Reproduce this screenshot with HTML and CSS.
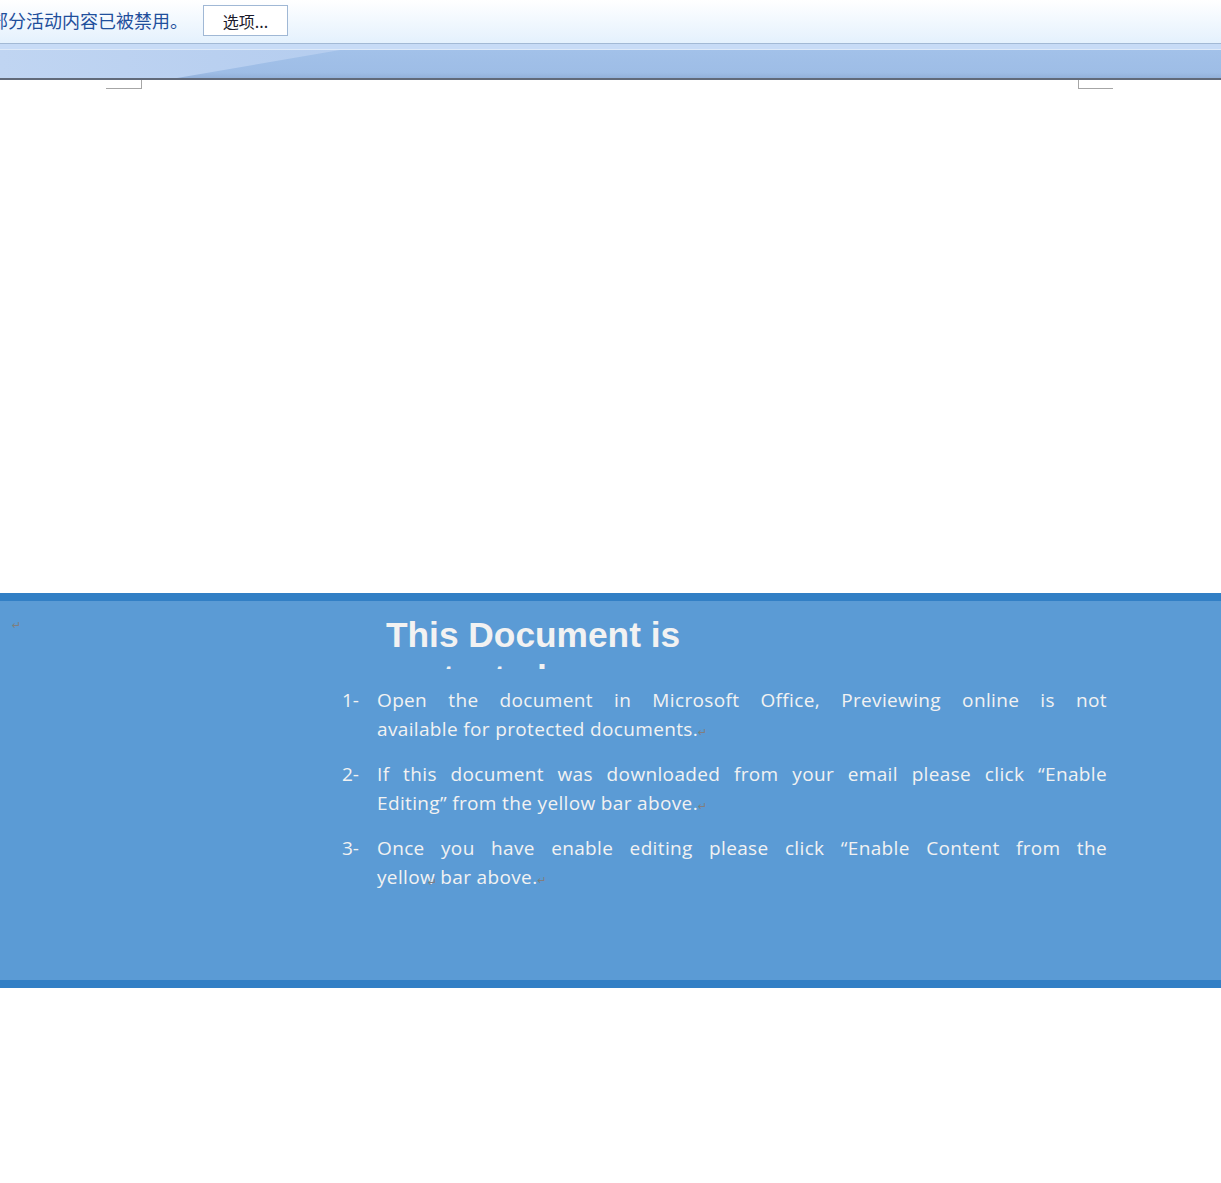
FILE: index.html
```html
<!DOCTYPE html>
<html lang="zh-CN">
<head>
    <meta charset="UTF-8">
    <meta name="viewport" content="width=device-width, initial-scale=1.0">
    <title>Protected Document</title>
    <link rel="stylesheet" href="styles.css">
</head>
<body>
    <div class="infobar">
        <span class="infobar-text">部分活动内容已被禁用。</span>
        <button type="button" class="infobar-button">选项...</button>
    </div>

    <div class="ribbon">
        <div class="ribbon-top"></div>
        <div class="ribbon-body"></div>
    </div>

    <div class="page">
        <div class="corner-marks">
            <div class="corner corner-left"></div>
            <div class="corner corner-right"></div>
        </div>
    </div>

    <div class="band">
        <div class="band-top">
            <div class="band-mark"><span class="mark">↵</span></div>
            <div class="title-box">
                <h1 class="title">This Document is protected</h1>
            </div>
        </div>

        <div class="steps">
            <div class="step">
                <span class="step-num">1-</span>
                <p class="step-text">
                    <span class="line-full">Open the document in Microsoft Office, Previewing online is not</span>
                    <span class="line-last">available for protected documents.<span class="mark">↵</span></span>
                </p>
            </div>
            <div class="step">
                <span class="step-num">2-</span>
                <p class="step-text">
                    <span class="line-full">If this document was downloaded from your email please click “Enable</span>
                    <span class="line-last">Editing” from the yellow bar above.<span class="mark">↵</span></span>
                </p>
            </div>
            <div class="step">
                <span class="step-num">3-</span>
                <p class="step-text">
                    <span class="line-full">Once you have enable editing please click “Enable Content from the</span>
                    <span class="line-last">yellow<span class="mark mark-over">↵</span> bar above.<span class="mark">↵</span></span>
                </p>
            </div>
        </div>
    </div>

    <div class="page-bottom"></div>
</body>
</html>
```

FILE: styles.css
```css
body {
    margin: 0;
    background: #ffffff;
    overflow: hidden;
}

/* info bar */
.infobar {
    height: 44px;
    display: flex;
    align-items: center;
    background: linear-gradient(#ffffff, #e4f1fd);
    border-bottom: 1px solid #a2b9d5;
    box-sizing: border-box;
    overflow: hidden;
}
.infobar-text {
    margin-left: -10px;
    margin-top: -3px;
    font-family: "Noto Sans CJK SC", sans-serif;
    font-size: 18px;
    color: #1f4f9c;
    white-space: nowrap;
}
.infobar-button {
    margin-left: 15px;
    width: 85px;
    height: 31px;
    margin-top: -2px;
    padding: 0;
    background: #ffffff;
    border: 1px solid #a0b8d5;
    font-family: "Noto Sans CJK SC", sans-serif;
    font-size: 16px;
    color: #1b1b2b;
}

/* ribbon strip */
.ribbon-top {
    height: 5px;
    background: #c7dbf6;
    border-bottom: 1px solid #dde9f9;
}
.ribbon-body {
    position: relative;
    height: 28px;
    background: linear-gradient(#a2c1e9, #9ebde6 80%, #93b1da);
    border-bottom: 2px solid #616a7a;
}
.ribbon-body::before {
    content: "";
    position: absolute;
    left: 0;
    top: 0;
    width: 340px;
    height: 100%;
    background: linear-gradient(90deg, #c0d5f2, #b5cdef);
    clip-path: polygon(0 0, 340px 0, 177px 100%, 0 100%);
}

/* white page area */
.page {
    height: 513px;
}
.corner-marks {
    display: flex;
    justify-content: space-between;
    padding: 0 108px 0 106px;
}
.corner {
    width: 35px;
    height: 8px;
    border-bottom: 1px solid #a6a6a6;
}
.corner-left { border-right: 1px solid #a6a6a6; }
.corner-right {
    width: 34px;
    border-left: 1px solid #a6a6a6;
}

/* blue band */
.band {
    height: 379px;
    background: #5b9bd5;
    border-top: 8px solid #327fc5;
    border-bottom: 8px solid #327fc5;
}
.band-top {
    display: grid;
    grid-template-columns: 386px 320px;
}
.band-mark {
    padding: 13px 0 0 12px;
    line-height: 20px;
}
.title-box {
    margin-top: 12px;
    height: 56px;
    overflow: hidden;
}
.title {
    margin: 0;
    font-family: "Liberation Sans", Arial, sans-serif;
    font-weight: bold;
    font-size: 35.3px;
    line-height: 43px;
    color: #f2f2f2;
}

.steps {
    margin: 17px 0 0 342px;
    width: 765px;
}
.step {
    display: flex;
    margin-bottom: 13px;
}
.step-num {
    width: 35px;
    flex-shrink: 0;
    font-family: "Open Sans", sans-serif;
    font-size: 19px;
    line-height: 29px;
    color: #f2f2f2;
}
.step-text {
    margin: 0;
    flex: 1;
    font-family: "Open Sans", sans-serif;
    font-size: 19px;
    line-height: 29px;
    letter-spacing: 0.35px;
    color: #f2f2f2;
}
.line-full {
    display: block;
    text-align: justify;
    text-align-last: justify;
}
.line-last {
    display: block;
    white-space: nowrap;
}

.mark {
    font-family: "DejaVu Sans", sans-serif;
    font-size: 11px;
    letter-spacing: 0;
    color: #7f7f7f;
}
.mark-over {
    display: inline-block;
    width: 0;
    position: relative;
    left: -7px;
    top: 2px;
}

.page-bottom {
    height: 200px;
}
```
